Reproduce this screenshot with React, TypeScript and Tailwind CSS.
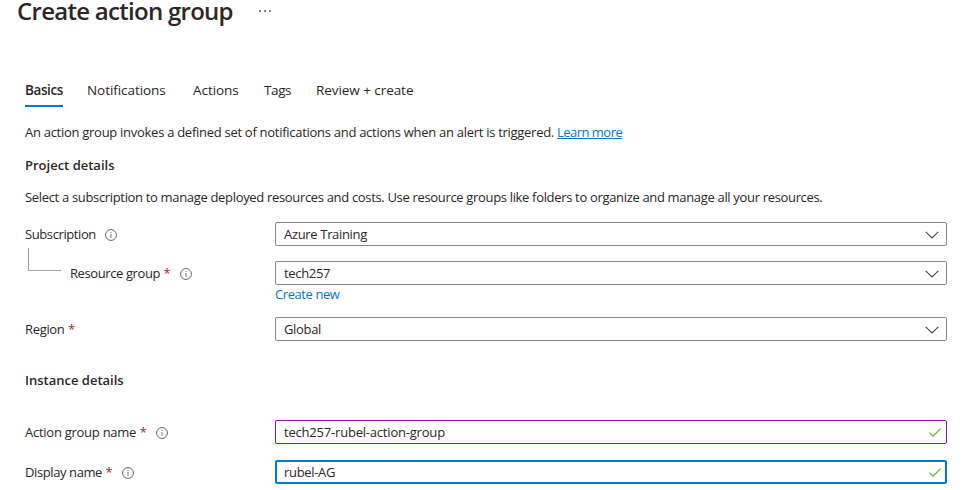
import type { ReactNode } from 'react';

function InfoIcon({ className = '' }: { className?: string }) {
  return (
    <svg viewBox="0 0 12 12" className={`mt-px h-3 w-3 shrink-0 ${className}`} fill="none">
      <circle cx="6" cy="6" r="5.45" stroke="#6b6967" strokeWidth="1" />
      <path d="M6 5v4" stroke="#7a7876" strokeWidth="1" />
      <path d="M6 3v1" stroke="#7a7876" strokeWidth="1" />
    </svg>
  );
}

function Chevron() {
  return (
    <svg viewBox="0 0 14 8" className="mt-px h-2 w-3.5 shrink-0" fill="none">
      <path d="M0.7 0.8L7 7L13.3 0.8" stroke="#4a4846" strokeWidth="1.1" />
    </svg>
  );
}

function Check() {
  return (
    <svg viewBox="0 0 12 9" className="h-[9px] w-3 shrink-0" fill="none">
      <path d="M0.4 4.6L4 8.1L11.6 0.6" stroke="#6bb22e" strokeWidth="1.2" />
    </svg>
  );
}

interface LabelProps {
  children: ReactNode;
  info?: boolean;
  star?: boolean;
  width?: string;
  tracking?: string;
}

function Label({ children, info, star, width = 'w-[250px]', tracking = 'tracking-[-0.4px]' }: LabelProps) {
  return (
    <div className={`flex h-6 shrink-0 items-center ${width}`}>
      <span className={tracking}>{children}</span>
      {star && <span className="ml-[3.5px] text-[#a4262c]">*</span>}
      {info && <InfoIcon className={star ? 'ml-[9.5px]' : 'ml-[9px]'} />}
    </div>
  );
}

function Select({ children }: { children: ReactNode }) {
  return (
    <div className="flex h-6 w-[672px] items-center justify-between rounded-[2px] border border-[#8a8886] pr-[7.5px] pl-2">
      <span>{children}</span>
      <Chevron />
    </div>
  );
}

export default function App() {
  return (
    <main className="h-[490px] w-[969px] bg-white pl-[25px] font-['Open_Sans','Noto_Sans',sans-serif] text-[13px] leading-[18px] tracking-[-0.33px] whitespace-nowrap text-[#292827]">
      <header className="-ml-2 flex h-[76px] items-start">
        <h1 className="h-[22px] w-[216px] text-[24px] leading-[22px] font-semibold tracking-[-0.72px]">Create action group</h1>
        <div className="mt-[10px] ml-[26px] flex gap-[3px]">
          <i className="h-[2px] w-[2px] bg-[#8a8886]" />
          <i className="h-[2px] w-[2px] bg-[#8a8886]" />
          <i className="h-[2px] w-[2px] bg-[#8a8886]" />
        </div>
      </header>
      <nav className="flex h-[31px] text-[13.5px] tracking-[-0.06px]">
        <div className="mr-6 h-[31px] w-[38px] border-b-2 border-[#0078d4] pt-[5px] font-semibold tracking-[-0.4px]">Basics</div>
        <div className="w-[106px] pt-[5px]">Notifications</div>
        <div className="w-[71px] pt-[5px]">Actions</div>
        <div className="w-[52px] pt-[5px] tracking-[-0.4px]">Tags</div>
        <div className="pt-[5px]">Review + create</div>
      </nav>
      <p className="mt-4">
        <span className="tracking-[-0.28px]">An action group invokes a defined set of notifications and actions when an alert is triggered. </span>
        <a className="tracking-[-0.53px] text-[#0078d4] underline">Learn more</a>
      </p>
      <h2 className="mt-[15px] font-semibold tracking-[0px]">Project details</h2>
      <p className="mt-[14px]">
        Select a subscription to manage deployed resources and costs. Use resource groups like folders to organize and manage all your resources.
      </p>
      <div className="mt-[16px] flex">
        <Label info>Subscription</Label>
        <Select>Azure Training</Select>
      </div>
      <div className="flex h-[39px]">
        <div className="mt-[2px] ml-[3px] h-[23px] w-[33px] border-b border-l border-[#a19f9d]" />
        <div className="mt-[15px] ml-[9px] flex">
          <Label star info width="w-[205px]">Resource group</Label>
          <Select>tech257</Select>
        </div>
      </div>
      <div className="flex h-8">
        <a className="ml-[250px] tracking-[-0.42px] text-[#0078d4]">Create new</a>
      </div>
      <div className="flex">
        <Label star tracking="tracking-[-0.33px]">Region</Label>
        <Select>Global</Select>
      </div>
      <h2 className="mt-[30px] font-semibold tracking-[0px]">Instance details</h2>
      <div className="mt-[31px] flex">
        <Label star info tracking="tracking-[-0.26px]">Action group name</Label>
        <div className="flex h-6 w-[672px] items-center justify-between rounded-[2px] border border-[#881798] pr-[5px] pl-2">
          <span className="tracking-[-0.2px]">tech257-rubel-action-group</span>
          <Check />
        </div>
      </div>
      <div className="mt-4 flex">
        <Label star info>Display name</Label>
        <div className="flex h-6 w-[672px] items-center justify-between rounded-[2px] border-2 border-[#0078d4] pr-1 pl-[7px]">
          <span>rubel-AG</span>
          <Check />
        </div>
      </div>
    </main>
  );
}
